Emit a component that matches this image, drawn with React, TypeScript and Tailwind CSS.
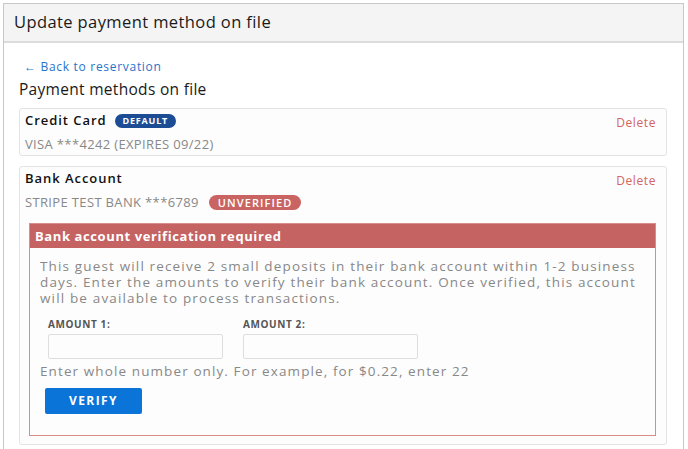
import React from 'react';

const font = { fontFamily: '"Open Sans", "Liberation Sans", sans-serif' };

const PaymentCard: React.FC<{ children: React.ReactNode; className?: string }> = ({ children, className }) => (
  <div className={`relative rounded-[3px] border border-[#e3e3e3] bg-[#fdfdfd] pl-[5px] pr-[10px] ${className ?? ''}`}>
    <button className="absolute right-[10px] top-[5px] text-[12px] tracking-[0.6px] text-[#d2655f]">Delete</button>
    {children}
  </div>
);

export default function App() {
  return (
    <div className="min-h-[449px] bg-white pl-[3px] pt-[3px] text-[#222]" style={font}>
      <div className="w-[681px] border border-[#c8c8c8] bg-white">
        {/* Header */}
        <div className="flex h-[39px] items-center border-b-2 border-[#dcdcdc] bg-[#f4f4f4] pl-[10px]">
          <h1 className="text-[16.5px] tracking-[0.4px] text-[#1a1a1a]">Update payment method on file</h1>
        </div>

        <div className="pl-[15px] pr-[16px] pt-[15px] pb-[10px]">
          <a className="ml-[5px] block text-[12px] tracking-[0.7px] text-[#1f74cc]">← Back to reservation</a>
          <h2 className="mt-[2px] text-[15.5px] tracking-[0.3px] text-[#1a1a1a]">Payment methods on file</h2>

          {/* Credit card */}
          <PaymentCard className="mt-[7px] h-[48px] pt-[2px]">
            <div className="flex items-center gap-[8px]">
              <span className="text-[13px] font-semibold tracking-[0.95px] text-[#111]">Credit Card</span>
              <span className="rounded-full bg-[#1c4d94] px-[8px] text-[9px] font-bold leading-[14px] tracking-[0.8px] text-white">DEFAULT</span>
            </div>
            <div className="mt-[4px] text-[13px] tracking-[0.35px] text-[#888]">VISA ***4242 (EXPIRES 09/22)</div>
          </PaymentCard>

          {/* Bank account */}
          <PaymentCard className="mt-[10px] pt-[2px] pb-[8px]">
            <div className="text-[13px] font-semibold tracking-[0.95px] text-[#111]">Bank Account</div>
            <div className="mt-[4px] flex items-center gap-[10px]">
              <span className="text-[13px] tracking-[0.35px] text-[#888]">STRIPE TEST BANK ***6789</span>
              <span className="rounded-full bg-[#c96463] px-[9px] text-[11px] font-semibold leading-[15px] tracking-[1.1px] text-white">UNVERIFIED</span>
            </div>

            <div className="mt-[11px] ml-[4px] border border-[#d98c8b] bg-[#fdfdfd]">
              <div className="flex h-[24px] items-center bg-[#c56262] pl-[5px] text-[13px] font-bold tracking-[0.6px] text-white">
                Bank account verification required
              </div>
              <div className="pl-[10px] pr-[10px] pb-[21px] pt-[10px]">
                <p className="text-[13.5px] leading-[16px] tracking-[1.15px] text-[#888]">
                  This guest will receive 2 small deposits in their bank account within 1-2 business days. Enter the amounts to verify their bank account. Once verified, this account will be available to process transactions.
                </p>
                <div className="ml-[8px] mt-[11px] flex gap-[20px]">
                  <label className="flex flex-col">
                    <span className="text-[10px] font-bold tracking-[0.6px] text-[#555]">AMOUNT 1:</span>
                    <input className="mt-[2px] h-[25px] w-[175px] rounded-[2px] border border-[#dedede] bg-[#fdfdfd]" />
                  </label>
                  <label className="flex flex-col">
                    <span className="text-[10px] font-bold tracking-[0.6px] text-[#555]">AMOUNT 2:</span>
                    <input className="mt-[2px] h-[25px] w-[175px] rounded-[2px] border border-[#dedede] bg-[#fdfdfd]" />
                  </label>
                </div>
                <p className="mt-[2px] text-[13.5px] tracking-[1.1px] text-[#888]">Enter whole number only. For example, for $0.22, enter 22</p>
                <button className="ml-[5px] mt-[6px] h-[26px] w-[97px] rounded-[2px] bg-[#0b74d9] text-[12px] font-bold tracking-[1.4px] text-white">
                  VERIFY
                </button>
              </div>
            </div>
          </PaymentCard>
        </div>
      </div>
    </div>
  );
}
